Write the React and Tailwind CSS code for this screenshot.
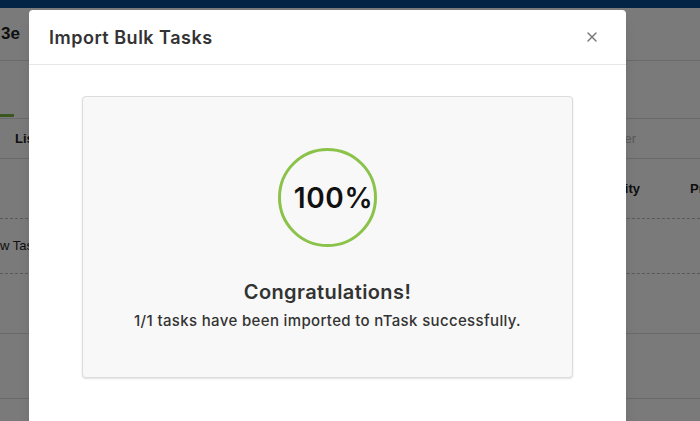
import { X } from 'lucide-react';

const font = { fontFamily: 'Inter, "Open Sans", sans-serif' };

// Dimmed task list that sits behind the dialog
const Backdrop = () => (
  <div className="absolute inset-0 bg-white text-[13px] text-[#222]" style={{ fontFamily: '"Liberation Sans", Arial, sans-serif' }}>
    <div className="h-[8px] bg-[#0a4d92]" />
    <div className="flex h-[53px] items-center border-b border-[#ddd] pl-[1px] text-[17px] font-semibold">3e</div>
    <div className="flex h-[58px] items-end border-b border-[#ddd]">
      <div className="mb-[1px] h-[3px] w-[14px] bg-[#7cb342]" />
    </div>
    <div className="flex h-[40px] items-center justify-between border-b border-[#ddd] pl-[15px] pr-[64px] font-semibold">
      <span>List</span>
      <span className="font-normal text-[#bbb]">Filter</span>
    </div>
    <div className="flex h-[60px] items-center justify-end gap-[50px] border-b border-dashed border-[#bbb] font-bold">
      <span>Priority</span>
      <span className="w-[10px]">Pr</span>
    </div>
    <div className="flex h-[55px] items-center border-b border-dashed border-[#bbb]">
      <span>w Task</span>
    </div>
    <div className="h-[60px] border-b border-[#ddd]" />
    <div className="h-[65px] border-b border-[#ddd]" />
  </div>
);

export default function App() {
  return (
    <div className="relative h-[421px] w-[700px] overflow-hidden" style={font}>
      <Backdrop />
      <div className="absolute inset-0 bg-black/[0.52]" />

      {/* Import dialog */}
      <div className="absolute left-[29px] top-[10px] h-[430px] w-[597px] rounded-t-[4px] bg-white shadow-lg">
        <div className="flex h-[55px] items-center justify-between border-b border-[#e6e6e6] pl-[20px] pr-[26px]">
          <h2 className="text-[18px] font-semibold tracking-[0.5px] text-[#333]">Import Bulk Tasks</h2>
          <X className="h-[16px] w-[16px] text-[#777]" strokeWidth={2} />
        </div>

        <div className="px-[53px] pt-[31px]">
          <div className="flex h-[282px] flex-col items-center rounded-[4px] border border-[#dcdcdc] bg-[#f8f8f8] shadow-[0_1px_2px_rgba(0,0,0,0.12)]">
            <div className="mt-[51px] flex h-[99px] w-[99px] items-center justify-center rounded-full border-[3px] border-[#8bc34a]">
              <span className="pl-[12px] text-[28px] font-semibold tracking-[0.6px] text-[#111]">100%</span>
            </div>
            <p className="mt-[30px] text-[20px] font-semibold tracking-[0.4px] text-[#333]">Congratulations!</p>
            <p className="mt-[3px] text-[15px] font-medium tracking-[0.35px] text-[#333]">
              1/1 tasks have been imported to nTask successfully.
            </p>
          </div>
        </div>
      </div>
    </div>
  );
}
